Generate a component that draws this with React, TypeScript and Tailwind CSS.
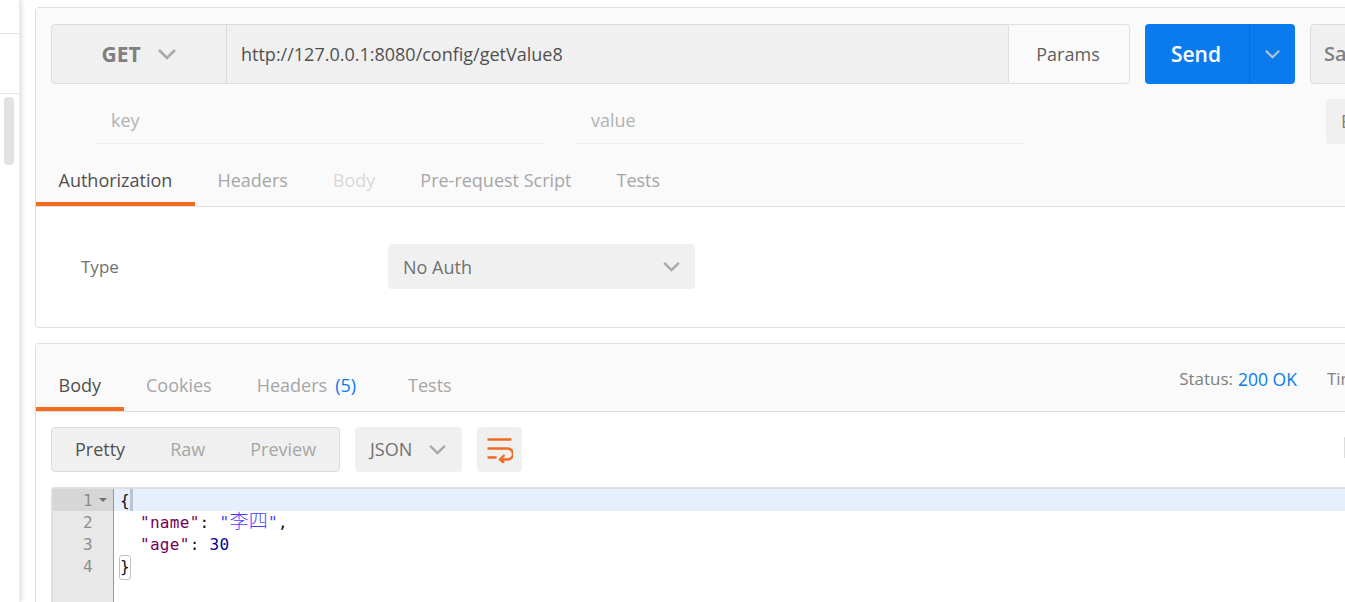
const sans = "font-['Open_Sans','Noto_Sans_CJK_SC',sans-serif]";

function Chevron({ className }: { className: string }) {
  return (
    <svg viewBox="0 0 20 12" fill="none" stroke="currentColor" strokeWidth="2.6" className={className}>
      <path d="M2 2l8 8 8-8" />
    </svg>
  );
}

function RequestBar() {
  return (
    <div className="flex h-[60px] items-stretch">
      <div className="flex w-[175px] shrink-0 items-center justify-center gap-[16px] rounded-l-[4px] border border-r-0 border-[#dcdcdc] bg-[#f0f0f0]">
        <span className="pt-px text-[21px] font-bold text-[#808080]">GET</span>
        <Chevron className="h-[12px] w-[20px] text-[#a9a9a9]" />
      </div>
      <div className="flex w-[782px] shrink-0 items-center border-y border-l border-[#dcdcdc] bg-[#f0f0f0] pl-[14px] text-[18px] text-[#505050]">
        http://127.0.0.1:8080/config/getValue8
      </div>
      <div className="flex w-[122px] shrink-0 items-center justify-center rounded-r-[4px] border border-[#e0e0e0] bg-[#fafafa] pr-[2px] text-[18px] text-[#606060]">
        Params
      </div>
      <div className="ml-[15px] flex w-[150px] shrink-0 rounded-[4px] bg-[#097bed] text-white">
        <div className="flex w-[105px] items-center justify-center border-r border-[#0a6dd0] pr-[2px] pt-[2px] text-[21px] font-semibold">
          Send
        </div>
        <div className="flex flex-1 items-center justify-center">
          <Chevron className="h-[10px] w-[17px] text-[#b4c4d4]" />
        </div>
      </div>
      <div className="ml-[15px] flex w-[120px] shrink-0 items-center rounded-[4px] border border-[#dcdcdc] bg-[#f0f0f0] pl-[13px] text-[20px] font-semibold text-[#808080]">
        Save
      </div>
    </div>
  );
}

function ParamRow() {
  return (
    <div className="mt-[15px] flex h-[45px]">
      <div className="ml-[45px] flex w-[450px] shrink-0 items-center border-b border-[#eeeeee] pb-[2px] pl-[15px] text-[18px] text-[#b3b3b3]">key</div>
      <div className="ml-[30px] flex w-[450px] shrink-0 items-center border-b border-[#eeeeee] pb-[2px] pl-[15px] text-[18px] text-[#b3b3b3]">value</div>
      <div className="ml-[300px] flex w-[80px] shrink-0 items-center rounded-[4px] bg-[#f0f0f0] pl-[15px] text-[18px] text-[#808080]">Bulk</div>
    </div>
  );
}

function Tab({ label, active, muted, lower, children }: { label: string; active?: boolean; muted?: boolean; lower?: boolean; children?: React.ReactNode }) {
  const tone = active ? "border-[#f26b21] text-[#505050]" : muted ? "border-transparent text-[#d9d9d9]" : "border-transparent text-[#a6a6a6]";
  return (
    <div className={`flex h-full items-center border-b-[4px] px-[22.5px] text-[18px] ${lower ? "pt-[4px]" : "pb-[1px]"} ${tone}`}>
      {label}
      {children}
    </div>
  );
}

function CodeEditor() {
  const numbers = [1, 2, 3, 4];
  return (
    <div className="ml-[15px] mt-[15px] flex h-[200px] rounded-tl-[4px] border-l-2 border-t-2 border-[#dedede] font-['DejaVu_Sans_Mono','Noto_Sans_CJK_SC',monospace] text-[16px] leading-[22px]">
      <div className="w-[61px] shrink-0 border-r border-[#999999] bg-[#e8e8e8] text-[#8c8c8c]">
        {numbers.map((n) => (
          <div key={n} className={`relative h-[22px] pl-[30px] pt-px ${n === 1 ? "bg-[#d6d6d6]" : ""}`}>
            {n}
            {n === 1 && <span className="absolute left-[46px] top-[9px] h-0 w-0 border-x-[4px] border-t-[4px] border-x-transparent border-t-[#707070]" />}
          </div>
        ))}
      </div>
      <div className="flex-1 tracking-[0.3px] text-[#111111]">
        <div className="flex h-[22px] bg-[#e6f0fc] pl-[6px] pt-px">
          <span>{"{"}</span>
          <span className="-mt-px ml-[0.5px] h-[22px] w-[3px] bg-[#b8c4d0]" />
        </div>
        <div className="h-[22px] pl-[26px] pt-px">
          <span className="text-[#7a0056]">"name"</span>: <span className="text-[#4a3cff]">"<span className="text-[19px] font-light leading-none">李四</span>"</span>,
        </div>
        <div className="h-[22px] pl-[26px] pt-px">
          <span className="text-[#7a0056]">"age"</span>: <span className="text-[#0000a0]">30</span>
        </div>
        <div className="pl-[5px]">
          <span className="inline-block h-[25px] w-[12px] rounded-[3px] border border-[#c0c0c0] text-center leading-[22px]">{"}"}</span>
        </div>
      </div>
    </div>
  );
}

export default function App() {
  return (
    <div className={`flex h-[602px] w-[1345px] overflow-hidden bg-white ${sans}`}>
      <aside className="w-[20px] shrink-0 border-r border-[#ececec] bg-white shadow-[2px_0_4px_rgba(0,0,0,0.12)]">
        <div className="h-[34px] border-b border-[#e4e4e4]" />
        <div className="h-[60px] border-b border-[#e4e4e4]" />
        <div className="ml-[4px] mt-[3px] h-[68px] w-[10px] rounded-[4px] bg-[#e2e2e2]" />
      </aside>

      <main className="w-[1400px] shrink-0 pl-[15px] pt-[7px]">
        <section className="h-[321px] rounded-l-[4px] border border-[#dddddd]">
          <div className="h-[199px] border-b border-[#dddddd] bg-[#fafafa] pl-[15px] pt-[16px]">
            <RequestBar />
            <ParamRow />
            <div className="-ml-[15px] mt-[15px] flex h-[47px]">
              <Tab label="Authorization" active />
              <Tab label="Headers" />
              <Tab label="Body" muted />
              <Tab label="Pre-request Script" />
              <Tab label="Tests" />
            </div>
          </div>
          <div className="flex pt-[37px]">
            <span className="ml-[45px] flex h-[45px] w-[307px] items-center pt-px text-[17px] text-[#707070]">Type</span>
            <div className="flex h-[45px] w-[307px] items-center justify-between rounded-[4px] bg-[#f0f0f0] pl-[15px] pr-[14px] text-[18px] text-[#707070]">
              <span className="pt-px">No Auth</span>
              <Chevron className="h-[11px] w-[19px] text-[#a9a9a9]" />
            </div>
          </div>
        </section>

        <section className="mt-[15px] h-[300px] rounded-tl-[4px] border-l border-t border-[#dddddd]">
          <div className="flex h-[68px] items-end border-b border-[#dddddd] bg-[#fafafa]">
            <div className="flex h-[52px]">
              <Tab label="Body" active lower />
              <Tab label="Cookies" lower />
              <Tab label="Headers" lower>
                <span className="ml-[8px] mr-[7px] text-[#097bed]">(5)</span>
              </Tab>
              <Tab label="Tests" lower />
            </div>
            <div className="ml-[705px] flex h-[64px] items-center text-[17px] text-[#808080]">
              Status:<span className="ml-[5px] text-[17.5px] text-[#097bed]">200 OK</span>
              <span className="ml-[30px]">Time</span>
            </div>
          </div>

          <div className="mt-[15px] flex h-[45px] pl-[15px]">
            <div className="flex w-[289px] items-center rounded-[4px] border border-[#dcdcdc] bg-[#f0f0f0] pl-[23px] text-[18px] text-[#a6a6a6]">
              <span className="text-[#505050]">Pretty</span>
              <span className="ml-[45px]">Raw</span>
              <span className="ml-[45px]">Preview</span>
            </div>
            <div className="ml-[15px] flex w-[107px] items-center justify-between rounded-[4px] bg-[#f0f0f0] pl-[15px] pr-[15px] text-[18px] text-[#707070]">
              JSON
              <Chevron className="h-[11px] w-[19px] text-[#a9a9a9]" />
            </div>
            <div className="ml-[15px] flex w-[45px] items-center justify-center rounded-[4px] bg-[#f0f0f0]">
              <svg width="26" height="26" viewBox="0 0 26 26" fill="none" stroke="#f26b21" strokeWidth="2.4">
                <path d="M0.500 2.500h24M0.500 11.500h20a5.500 5.500 0 0 1 0 11h-7M0.500 20.500h9M17.500 18l-4.500 4.500 4 3.500" />
              </svg>
            </div>
            <div className="ml-[822px] mt-[10px] h-[21px] w-[10px] bg-[#dcdcdc]" />
          </div>

          <CodeEditor />
        </section>
      </main>
    </div>
  );
}
